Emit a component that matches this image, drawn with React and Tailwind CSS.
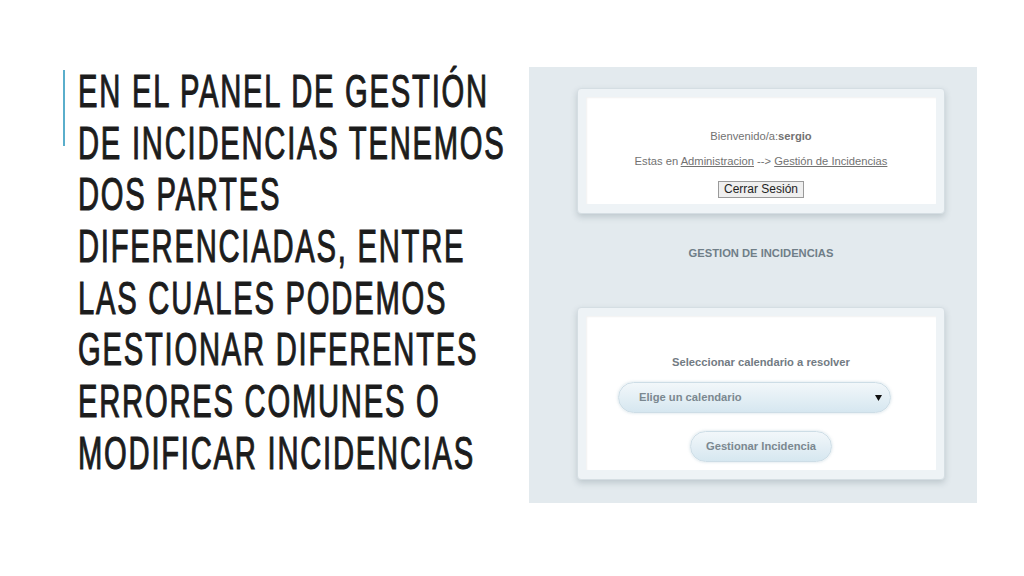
import React from "react";

const lines = [
  "EN EL PANEL DE GESTIÓN",
  "DE INCIDENCIAS TENEMOS",
  "DOS PARTES",
  "DIFERENCIADAS, ENTRE",
  "LAS CUALES PODEMOS",
  "GESTIONAR DIFERENTES",
  "ERRORES COMUNES O",
  "MODIFICAR INCIDENCIAS",
];

function Card({ heightClass, children }) {
  return (
    <div className="w-[368px] rounded-[4px] border border-[#d5dee3] bg-[#eef3f6] p-[8px] pb-[9px] shadow-[0_3px_6px_rgba(60,80,90,0.22)]">
      <div className={`${heightClass} bg-white shadow-[inset_1px_1px_2px_rgba(0,0,0,0.06)] flex flex-col`}>
        {children}
      </div>
    </div>
  );
}

export default function App() {
  return (
    <div className="w-[1024px] h-[576px] bg-white flex overflow-hidden">
      {/* Left: title */}
      <div className="w-[529px] pl-[63px] pt-[66px] flex items-start">
        <div className="w-[2px] h-[76px] mt-[4px] bg-[#5aaecb] shrink-0" />
        <div
          className="ml-[13px] text-[46px] leading-[51.67px] tracking-[0.06em] text-[#1c1c1c] whitespace-nowrap origin-left scale-x-[0.635] [-webkit-text-stroke:1.1px_#1c1c1c]"
          style={{ fontFamily: '"Liberation Sans", Arial, sans-serif' }}
        >
          {lines.map((l) => (
            <div key={l}>{l}</div>
          ))}
        </div>
      </div>

      {/* Right: screenshot panel */}
      <div
        className="mt-[67px] w-[448px] h-[436px] bg-[#e3eaee] pl-[48px] pt-[21px] flex flex-col"
        style={{ fontFamily: '"Liberation Sans", Arial, sans-serif' }}
      >
        <Card heightClass="h-[107px]">
          <div className="flex flex-col items-center pt-[33px] text-[11.2px] leading-[13px] text-[#727272]">
            <div>
              Bienvenido/a:<span className="font-bold">sergio</span>
            </div>
            <div className="mt-[12px]">
              Estas en <span className="underline">Administracion</span> --&gt;{" "}
              <span className="underline">Gestión de Incidencias</span>
            </div>
            <button className="mt-[13px] h-[17px] px-[5px] border border-[#9a9a9a] bg-[#efefef] text-[12px] leading-[15px] text-[#1e1e1e]">
              Cerrar Sesión
            </button>
          </div>
        </Card>

        <div className="w-[368px] mt-[33px] text-center text-[11.2px] leading-[13px] font-bold text-[#6f7e88]">
          GESTION DE INCIDENCIAS
        </div>

        <div className="mt-[47px]">
          <Card heightClass="h-[154px]">
            <div className="pt-[40px] text-center text-[11.2px] leading-[13px] font-bold text-[#727b83]">
              Seleccionar calendario a resolver
            </div>
            <div className="ml-[32px] mt-[13px] w-[273px] h-[31px] rounded-full border border-[#cddde6] bg-gradient-to-b from-[#f2f7fa] to-[#d6e7f0] shadow-[0_0_3px_rgba(120,160,180,0.35)] flex items-center justify-between pl-[20px] pr-[8px]">
              <span className="text-[11.2px] font-bold text-[#7b8890]">Elige un calendario</span>
              <svg width="7" height="6" viewBox="0 0 7 6">
                <path d="M0 0 H7 L3.5 6 Z" fill="#111" />
              </svg>
            </div>
            <div className="flex justify-center mt-[18px]">
              <button className="w-[142px] h-[31px] rounded-full border border-[#cddde6] bg-gradient-to-b from-[#f2f7fa] to-[#d6e7f0] shadow-[0_0_3px_rgba(120,160,180,0.35)] text-[11.2px] font-bold text-[#7b8890]">
                Gestionar Incidencia
              </button>
            </div>
          </Card>
        </div>
      </div>
    </div>
  );
}
